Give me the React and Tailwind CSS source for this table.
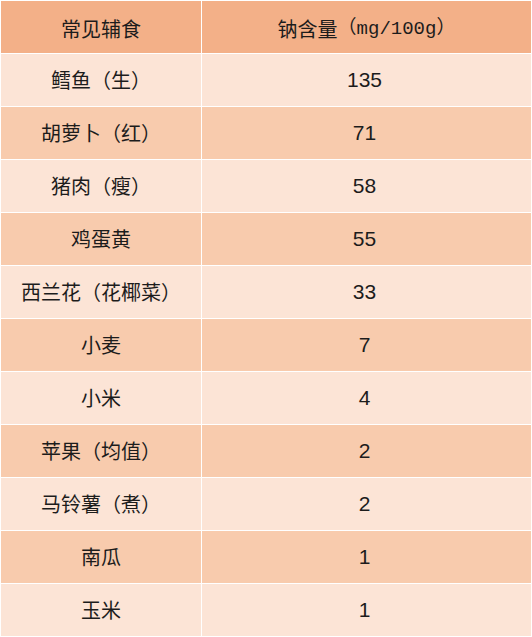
const rows = [
  ["鳕鱼（生）", "135"],
  ["胡萝卜（红）", "71"],
  ["猪肉（瘦）", "58"],
  ["鸡蛋黄", "55"],
  ["西兰花（花椰菜）", "33"],
  ["小麦", "7"],
  ["小米", "4"],
  ["苹果（均值）", "2"],
  ["马铃薯（煮）", "2"],
  ["南瓜", "1"],
  ["玉米", "1"],
];

export default function App() {
  return (
    <div className="w-[532px] h-[637px] bg-white p-px font-['Noto_Sans_CJK_SC',sans-serif] text-[#1c1c1c]">
      <div className="grid grid-cols-[200px_1fr] gap-px bg-white">
        <div className="h-[52px] flex items-center justify-center bg-[#f3b088] text-[20px] pt-1">
          常见辅食
        </div>
        <div className="h-[52px] flex items-center justify-center bg-[#f3b088] text-[20px] pt-1">
          钠含量<span className="font-['Liberation_Mono','Noto_Sans_CJK_SC',monospace] text-[19px]">（mg/100g）</span>
        </div>
        {rows.map((r, i) => {
          const bg = i % 2 === 0 ? "bg-[#fce4d6]" : "bg-[#f8cbad]";
          return [
            <div
              key={"a" + i}
              className={`h-[52px] flex items-center justify-center text-[20px] ${bg}`}
            >
              {r[0]}
            </div>,
            <div
              key={"b" + i}
              className={`h-[52px] flex items-center justify-center text-[21px] pr-1 font-['Liberation_Sans',sans-serif] ${bg}`}
            >
              {r[1]}
            </div>,
          ];
        })}
      </div>
    </div>
  );
}
